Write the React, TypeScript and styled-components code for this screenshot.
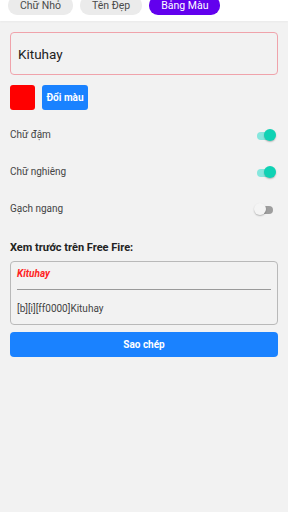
import React, { useState } from 'react';
import styled, { createGlobalStyle } from 'styled-components';

const GlobalStyle = createGlobalStyle`
    html, body {
        margin: 0;
        padding: 0;
        background: #f2f2f2;
        font-family: Roboto, 'Noto Sans', 'Liberation Sans', sans-serif;
    }
`;

const Page = styled.div`
    width: 288px;
    min-height: 512px;
    background: #f2f2f2;
`;

const TabBar = styled.div`
    display: flex;
    gap: 7px;
    height: 21px;
    padding-left: 8px;
    background: #ffffff;
    box-shadow: 0 1px 2px rgba(0, 0, 0, 0.04);
    overflow: hidden;
`;

const Tab = styled.div<{ active?: boolean }>`
    margin-top: -4px;
    height: 19px;
    padding: 0 ${props => (props.active ? 12 : 12)}px;
    border-radius: 9px;
    display: flex;
    align-items: center;
    font-size: 10.5px;
    background: ${props => (props.active ? '#6200ee' : '#ebebeb')};
    color: ${props => (props.active ? '#ffffff' : '#4a4a4a')};
`;

const Content = styled.div`
    padding: 11px 10px 0;
`;

const NameInput = styled.input`
    box-sizing: border-box;
    width: 100%;
    height: 43px;
    border: 1px solid #f0a3ab;
    border-radius: 4px;
    background: #f2f2f2;
    padding: 0 7px;
    font-family: inherit;
    font-size: 13.5px;
    color: #222;
    outline: none;
`;

const ColorRow = styled.div`
    display: flex;
    gap: 7px;
    margin-top: 10px;
`;

const Swatch = styled.div<{ color: string }>`
    width: 25px;
    height: 25px;
    border-radius: 3px;
    background: ${props => props.color};
`;

const BlueButton = styled.button<{ full?: boolean }>`
    height: 25px;
    width: ${props => (props.full ? '100%' : '46px')};
    border: none;
    border-radius: ${props => (props.full ? 4 : 3)}px;
    background: #1a82ff;
    color: #ffffff;
    font-family: inherit;
    font-size: 10px;
    font-weight: 700;
    padding: 0;
`;

const ToggleList = styled.div`
    margin-top: 6px;
`;

const ToggleRow = styled.div`
    height: 37px;
    display: flex;
    align-items: center;
    justify-content: space-between;
    font-size: 10px;
    color: #444;
`;

const Switch = styled.div<{ on: boolean }>`
    position: relative;
    width: 22px;
    height: 14px;
    margin-right: 2px;
    display: flex;
    align-items: center;
    justify-content: ${props => (props.on ? 'flex-end' : 'flex-start')};

    &::before {
        content: '';
        position: absolute;
        left: 3px;
        right: 3px;
        top: 4px;
        height: 8px;
        border-radius: 4px;
        background: ${props => (props.on ? 'rgba(3, 218, 197, 0.45)' : '#9e9e9e')};
    }
`;

const Thumb = styled.span<{ on: boolean }>`
    position: relative;
    width: 12px;
    height: 12px;
    border-radius: 50%;
    background: ${props => (props.on ? '#0fd2b4' : '#f4f4f4')};
    box-shadow: 0 1px 1.5px rgba(0, 0, 0, 0.25);
`;

const Title = styled.div`
    margin-top: 14px;
    font-size: 11px;
    font-weight: 700;
    color: #222;
`;

const PreviewBox = styled.div`
    margin-top: 7px;
    box-sizing: border-box;
    height: 64px;
    border: 1px solid #b9b9b9;
    border-radius: 4px;
    padding: 6px 6px 0 6px;
`;

const PreviewName = styled.div`
    font-size: 10px;
    font-weight: 700;
    font-style: italic;
    color: #ff2424;
    line-height: 12px;
`;

const Divider = styled.div`
    margin: 9px 0 0;
    height: 1px;
    background: #9a9a9a;
`;

const CodeText = styled.div`
    margin-top: 13px;
    font-size: 10px;
    color: #444;
    line-height: 12px;
`;

const CopyRow = styled.div`
    margin-top: 7px;
`;

const toggles = ['Chữ đậm', 'Chữ nghiêng', 'Gạch ngang'];

const App = () => {
    const [states, setStates] = useState([true, true, false]);

    return (
        <Page>
            <GlobalStyle />
            <TabBar>
                <Tab>Chữ Nhỏ</Tab>
                <Tab>Tên Đẹp</Tab>
                <Tab active>Bảng Màu</Tab>
            </TabBar>
            <Content>
                <NameInput defaultValue="Kituhay" />
                <ColorRow>
                    <Swatch color="#ff0000" />
                    <BlueButton>Đổi màu</BlueButton>
                </ColorRow>
                <ToggleList>
                    {toggles.map((label, i) => (
                        <ToggleRow key={label}>
                            {label}
                            <Switch
                                on={states[i]}
                                onClick={() => setStates(s => s.map((v, j) => (j === i ? !v : v)))}
                            >
                                <Thumb on={states[i]} />
                            </Switch>
                        </ToggleRow>
                    ))}
                </ToggleList>
                <Title>Xem trước trên Free Fire:</Title>
                <PreviewBox>
                    <PreviewName>Kituhay</PreviewName>
                    <Divider />
                    <CodeText>[b][i][ff0000]Kituhay</CodeText>
                </PreviewBox>
                <CopyRow>
                    <BlueButton full>Sao chép</BlueButton>
                </CopyRow>
            </Content>
        </Page>
    );
};

export default App;
